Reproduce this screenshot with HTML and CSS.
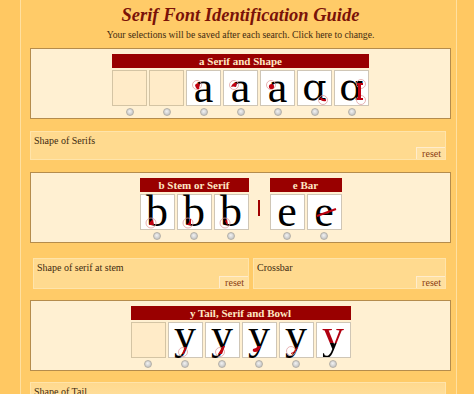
FILE: index.html
```html
<!DOCTYPE html>
<html>
<head>
<meta charset="utf-8">
<link rel="stylesheet" href="styles.css">
</head>
<body>
<div class="page">
  <h1 class="title">Serif Font Identification Guide</h1>
  <p class="sub">Your selections will be saved after each search. Click here to change.</p>

  <div class="panel">
    <div class="groups">
      <div class="group">
        <div class="ghead">a Serif and Shape</div>
        <div class="cells">
          <div class="opt"><div class="cell empty"></div><span class="radio"></span></div>
          <div class="opt"><div class="cell empty"></div><span class="radio"></span></div>
          <div class="opt"><div class="cell"><span class="glyph">a</span>
            <svg class="mark" viewBox="0 0 33 34"><circle cx="10" cy="14" r="4.5" class="ring"/><path d="M8 14 q2 -3 5 -1 l-1 5 q-3 1 -4 -4z" class="red"/></svg></div><span class="radio"></span></div>
          <div class="opt"><div class="cell"><span class="glyph">a</span>
            <svg class="mark" viewBox="0 0 33 34"><circle cx="10" cy="14" r="4.5" class="ring"/><path d="M7 16 q2 -5 6 -4 l-1 4 q-3 -1 -5 0z" class="red"/></svg></div><span class="radio"></span></div>
          <div class="opt"><div class="cell"><span class="glyph">a</span>
            <svg class="mark" viewBox="0 0 33 34"><circle cx="10" cy="14" r="4.5" class="ring"/><ellipse cx="10.5" cy="15.5" rx="2.6" ry="2.6" class="red"/></svg></div><span class="radio"></span></div>
          <div class="opt"><div class="cell"><span class="glyph alpha">ɑ</span>
            <svg class="mark" viewBox="0 0 33 34"><circle cx="25" cy="29" r="4.5" class="ring"/><path d="M22 28 q2 3 6 2 l0 -2 q-3 1 -5 -2z" class="red"/></svg></div><span class="radio"></span></div>
          <div class="opt"><div class="cell"><span class="glyph alpha">ɑ</span>
            <svg class="mark" viewBox="0 0 33 34"><circle cx="26" cy="13" r="4.5" class="ring"/><circle cx="26" cy="29" r="4.5" class="ring"/><path d="M22 12 h6 v2 h-2 v13 h2 v2 h-6 v-2 h1 v-13 h-1z" class="red"/></svg></div><span class="radio"></span></div>
        </div>
      </div>
    </div>
  </div>

  <div class="field wide">
    <div class="flabel">Shape of Serifs</div>
    <div class="reset">reset</div>
  </div>

  <div class="panel">
    <div class="groups">
      <div class="group">
        <div class="ghead">b Stem or Serif</div>
        <div class="cells">
          <div class="opt"><div class="cell"><span class="glyph">b</span>
            <svg class="mark" viewBox="0 0 33 34"><circle cx="10" cy="28" r="5" class="ring"/><path d="M9 27 l3 -3 l1 6 l-5 0z" class="red"/></svg></div><span class="radio"></span></div>
          <div class="opt"><div class="cell"><span class="glyph">b</span>
            <svg class="mark" viewBox="0 0 33 34"><circle cx="10" cy="28" r="5" class="ring"/><path d="M8 30 q3 -1 4 -6 l1 0 l0 6z" class="red"/></svg></div><span class="radio"></span></div>
          <div class="opt"><div class="cell"><span class="glyph">b</span>
            <svg class="mark" viewBox="0 0 33 34"><circle cx="10" cy="28" r="5" class="ring"/><path d="M10 26 q1 3 3 4 l-1 -6z" class="red"/></svg></div><span class="radio"></span></div>
        </div>
      </div>
      <span class="sep"></span>
      <div class="group">
        <div class="ghead">e Bar</div>
        <div class="cells">
          <div class="opt"><div class="cell"><span class="glyph">e</span></div><span class="radio"></span></div>
          <div class="opt"><div class="cell"><span class="glyph">e</span>
            <svg class="mark" viewBox="0 0 33 34"><path d="M9 21 L28 14" class="redline"/></svg></div><span class="radio"></span></div>
        </div>
      </div>
    </div>
  </div>

  <div class="row">
    <div class="field half">
      <div class="flabel">Shape of serif at stem</div>
      <div class="reset">reset</div>
    </div>
    <div class="field half">
      <div class="flabel">Crossbar</div>
      <div class="reset">reset</div>
    </div>
  </div>

  <div class="panel">
    <div class="groups">
      <div class="group">
        <div class="ghead">y Tail, Serif and Bowl</div>
        <div class="cells">
          <div class="opt"><div class="cell empty"></div><span class="radio"></span></div>
          <div class="opt"><div class="cell"><span class="glyph up">y</span>
            <svg class="mark" viewBox="0 0 33 34"><circle cx="14" cy="29" r="4.5" class="ring"/><path d="M16 24 l-3 7 l2 0 l3 -7z" class="red"/></svg></div><span class="radio"></span></div>
          <div class="opt"><div class="cell"><span class="glyph up">y</span>
            <svg class="mark" viewBox="0 0 33 34"><circle cx="14" cy="29" r="4.5" class="ring"/><path d="M17 23 l-5 8 l4 0 l3 -8z" class="red"/></svg></div><span class="radio"></span></div>
          <div class="opt"><div class="cell"><span class="glyph up">y</span>
            <svg class="mark" viewBox="0 0 33 34"><path d="M18 23 q-2 6 -6 6 q-3 0 -2 -3 q3 0 5 -3z" class="red"/></svg></div><span class="radio"></span></div>
          <div class="opt"><div class="cell"><span class="glyph up">y</span>
            <svg class="mark" viewBox="0 0 33 34"><circle cx="11" cy="28" r="4.5" class="ring"/><path d="M17 24 q-2 5 -6 6 l0 1 q5 -1 7 -7z" class="red"/></svg></div><span class="radio"></span></div>
          <div class="opt"><div class="cell"><span class="glyph up two">y</span></div><span class="radio"></span></div>
        </div>
      </div>
    </div>
  </div>

  <div class="field wide last">
    <div class="flabel">Shape of Tail</div>
    <div class="reset">reset</div>
  </div>
</div>
</body>
</html>
```

FILE: styles.css
```css
html, body {
  margin: 0;
  padding: 0;
}
body {
  background: #ffc862;
  font-family: "Liberation Serif", "DejaVu Serif", serif;
  overflow: hidden;
  height: 394px;
}
.page {
  margin-left: 20px;
  width: 437px;
  height: 394px;
  overflow: hidden;
  background: #ffcb68;
  border-left: 1px solid #ffe0a0;
  border-right: 1px solid #ffe0a0;
  padding: 0 5px 0 9px;
  box-sizing: border-box;
}
.title {
  margin: 2px 0 0;
  text-align: center;
  font-size: 18.5px;
  line-height: 26px;
  font-style: italic;
  font-weight: bold;
  color: #7a1208;
}
.sub {
  margin: 0;
  text-align: center;
  font-size: 9.7px;
  line-height: 13px;
  color: #3e2a10;
}
.panel {
  margin-top: 7px;
  background: #fff0d2;
  border: 1px solid #b58c4c;
  padding: 5px 0 2px;
  display: flex;
  justify-content: center;
}
.field + .panel {
  margin-top: 12px;
}
.row + .panel {
  margin-top: 11px;
}
.groups {
  display: flex;
  align-items: flex-start;
}
.group {
  display: flex;
  flex-direction: column;
}
.ghead {
  background: #990000;
  color: #ffe8c4;
  font-weight: bold;
  font-size: 11px;
  line-height: 14px;
  height: 14px;
  text-align: center;
  margin-bottom: 2px;
}
.cells {
  display: flex;
  gap: 2px;
}
.opt {
  display: flex;
  flex-direction: column;
  align-items: center;
}
.cell {
  position: relative;
  width: 35px;
  height: 36px;
  box-sizing: border-box;
  border: 1px solid #cfc6b6;
  background: #ffffff;
  text-align: center;
}
.cell.empty {
  background: #ffebc8;
  border-color: #d4c4a4;
}
.glyph {
  display: block;
  font-family: "Liberation Serif", serif;
  font-size: 44px;
  line-height: 34px;
  height: 34px;
  color: #000;
}
.glyph.alpha {
  font-family: "DejaVu Serif", serif;
  font-size: 38px;
  line-height: 32px;
}
.glyph.up {
  line-height: 24px;
}
.glyph.two {
  background: linear-gradient(#b00010 0, #b00010 58%, #000 58%);
  -webkit-background-clip: text;
  background-clip: text;
  color: transparent;
}
.mark {
  position: absolute;
  left: 0;
  top: 0;
  width: 33px;
  height: 34px;
}
.ring {
  fill: none;
  stroke: #e0a0a0;
  stroke-width: 0.8;
}
.red {
  fill: #c00010;
}
.redline {
  stroke: #c00010;
  stroke-width: 2;
  fill: none;
}
.radio {
  width: 6px;
  height: 6px;
  margin-top: 2px;
  border-radius: 50%;
  border: 1px solid #b4b0a8;
  background: radial-gradient(circle at 45% 40%, #f2f2f2 0, #d4d4d4 50%, #b8b8b8 100%);
}
.sep {
  width: 2px;
  height: 16px;
  background: #a00000;
  margin: 22px 10px 0 9px;
}
.field {
  margin-top: 12px;
  background: #ffda8f;
  border: 1px solid #ffe4aa;
  height: 29px;
  box-sizing: border-box;
  display: flex;
  flex-direction: column;
  align-items: flex-start;
}
.field.wide {
  margin-right: 5px;
}
.field.last {
  margin-top: 11px;
  background: linear-gradient(#ffd98e, #ffe3a6);
}
.flabel {
  font-size: 10px;
  line-height: 12px;
  color: #3e2a10;
  padding: 3px 3px 0;
}
.reset {
  margin-top: auto;
  align-self: flex-end;
  background: #ffe0a0;
  border-left: 1px solid #ffeccc;
  border-top: 1px solid #ffeccc;
  color: #8a3c10;
  font-size: 10px;
  line-height: 11px;
  padding: 0 4px 0 5px;
}
.row {
  margin: 15px 5px 0 3px;
  display: flex;
  gap: 4px;
}
.row .field {
  margin-top: 0;
  height: 31px;
}
.row .field:first-child {
  width: 216px;
}
.row .field:last-child {
  flex: 1;
}
```
